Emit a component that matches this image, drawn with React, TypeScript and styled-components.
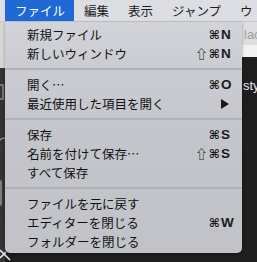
import React from 'react';
import styled, { createGlobalStyle } from 'styled-components';

const GlobalStyle = createGlobalStyle`
  html, body {
    margin: 0;
    padding: 0;
    background: #1e1e1e;
  }
`;

type TItem =
  | { kind: 'item'; label: string; mods?: string; key?: string; submenu?: boolean }
  | { kind: 'sep' };

const items: TItem[] = [
  { kind: 'item', label: '新規ファイル', mods: '⌘', key: 'N' },
  { kind: 'item', label: '新しいウィンドウ', mods: '⇧⌘', key: 'N' },
  { kind: 'sep' },
  { kind: 'item', label: '開く…', mods: '⌘', key: 'O' },
  { kind: 'item', label: '最近使用した項目を開く', submenu: true },
  { kind: 'sep' },
  { kind: 'item', label: '保存', mods: '⌘', key: 'S' },
  { kind: 'item', label: '名前を付けて保存…', mods: '⇧⌘', key: 'S' },
  { kind: 'item', label: 'すべて保存' },
  { kind: 'sep' },
  { kind: 'item', label: 'ファイルを元に戻す' },
  { kind: 'item', label: 'エディターを閉じる', mods: '⌘', key: 'W' },
  { kind: 'item', label: 'フォルダーを閉じる' },
];

const menus = ['ファイル', '編集', '表示', 'ジャンプ', 'ウ'];

const App = () => {
  return (
    <Screen>
      <GlobalStyle />
      <MenuBar>
        {menus.map((m, i) => (
          <MenuTitle key={m} active={i === 0}>
            {m}
          </MenuTitle>
        ))}
      </MenuBar>
      <Workspace>
        <ActivityBar>
          <StripTop />
          <StripIcons>
            <svg width="5" height="180" viewBox="0 0 5 180">
              <rect x="-6" y="17" width="9" height="14" fill="none" stroke="#8a8a8a" strokeWidth="1.5" />
              <path d="M5 70 A7 7 0 0 0 0 82" fill="none" stroke="#8a8a8a" strokeWidth="1.5" />
              <rect x="-2" y="112" width="4" height="26" rx="2" fill="#7d7d7d" />
            </svg>
          </StripIcons>
        </ActivityBar>
        <Editor>
          <TabBar>lac</TabBar>
          <Breadcrumb />
          <Code>sty</Code>
        </Editor>
        <Cross>
          <svg width="14" height="14" viewBox="0 0 14 14">
            <path d="M0 2 L10 12 M0 10 L6 4" stroke="#e6e6e6" strokeWidth="1.6" />
          </svg>
        </Cross>
        <Dropdown>
          {items.map((it, i) =>
            it.kind === 'sep' ? (
              <Separator key={i} />
            ) : (
              <Row key={i}>
                <Label>{it.label}</Label>
                <Mods>
                  {(it.mods || '').split('').map((g, j) => (
                    <Glyph key={j} shift={g === '⇧'}>
                      {g}
                    </Glyph>
                  ))}
                </Mods>
                <Key>
                  {it.submenu ? (
                    <svg width="8" height="10" viewBox="0 0 8 10">
                      <polygon points="0,0 8,5 0,10" fill="#1a1a1a" />
                    </svg>
                  ) : (
                    it.key
                  )}
                </Key>
              </Row>
            )
          )}
        </Dropdown>
      </Workspace>
    </Screen>
  );
};

export default App;

const Screen = styled.div`
  width: 257px;
  height: 262px;
  overflow: hidden;
  background: #1e1e1e;
  font-family: 'Noto Sans CJK JP', 'Liberation Sans', sans-serif;
`;

const MenuBar = styled.div`
  display: flex;
  height: 21px;
  padding-left: 5px;
  background: #dcdee3;
  border-bottom: 1px solid #c4c6ca;
  white-space: nowrap;
  overflow: hidden;
`;

const MenuTitle = styled.div<{ active?: boolean }>`
  display: flex;
  align-items: center;
  padding: 0 9px 0 10px;
  font-size: 12.5px;
  color: ${(p) => (p.active ? '#ffffff' : '#1c1c1c')};
  background: ${(p) => (p.active ? '#1f69d6' : 'transparent')};
`;

const Workspace = styled.div`
  position: relative;
  display: flex;
  height: 240px;
`;

const ActivityBar = styled.div`
  width: 5px;
  display: flex;
  flex-direction: column;
  background: #333333;
`;

const StripTop = styled.div`
  height: 46px;
  background: #d6d6d6;
`;

const StripIcons = styled.div`
  flex: 1;
  overflow: hidden;
`;

const Editor = styled.div`
  flex: 1;
  display: flex;
  flex-direction: column;
`;

const TabBar = styled.div`
  height: 23px;
  padding-left: 239px;
  background: #dedede;
  color: #a0a0a0;
  font-family: 'Liberation Sans', sans-serif;
  font-size: 13px;
  line-height: 26px;
`;

const Breadcrumb = styled.div`
  height: 12px;
  background: #f2f2f2;
`;

const Code = styled.div`
  flex: 1;
  background: #1e1e1e;
  padding: 21px 0 0 238px;
  color: #e8e8e8;
  font-family: 'Liberation Sans', sans-serif;
  font-size: 13px;
`;

const Cross = styled.div`
  position: absolute;
  left: 0;
  bottom: 0;
  line-height: 0;
`;

const Dropdown = styled.div`
  position: absolute;
  top: 0;
  left: 5px;
  width: 237px;
  height: 231px;
  box-sizing: border-box;
  padding: 3px 0 2px;
  background: linear-gradient(180deg, #d2d4d9 0px, #cbcdd2 40px, #c3c5ca 120px, #c1c3c8 100%);
  border-radius: 0 0 5px 5px;
  box-shadow: 0 1px 3px rgba(0, 0, 0, 0.35);
`;

const Row = styled.div`
  display: grid;
  grid-template-columns: 1fr auto 13px;
  align-items: center;
  height: 19px;
  padding: 0 8px 0 22px;
  color: #111111;
`;

const Label = styled.span`
  font-size: 12.5px;
  white-space: nowrap;
`;

const Mods = styled.span`
  display: flex;
  justify-content: flex-end;
  align-items: center;
  gap: 1px;
  padding-right: 1px;
  color: #1a1a1a;
`;

const Glyph = styled.span<{ shift?: boolean }>`
  font-family: ${(p) => (p.shift ? "'Noto Sans CJK JP'" : "'DejaVu Sans'")}, sans-serif;
  font-size: ${(p) => (p.shift ? '12.5px' : '12px')};
  font-weight: 700;
`;

const Key = styled.span`
  display: flex;
  align-items: center;
  font-family: 'Liberation Sans', sans-serif;
  font-size: 13.5px;
  font-weight: 600;
  color: #1a1a1a;
`;

const Separator = styled.div`
  height: 12px;
  display: flex;
  align-items: center;

  &::before {
    content: '';
    flex: 1;
    height: 2px;
    background: #b0b2b7;
  }
`;
